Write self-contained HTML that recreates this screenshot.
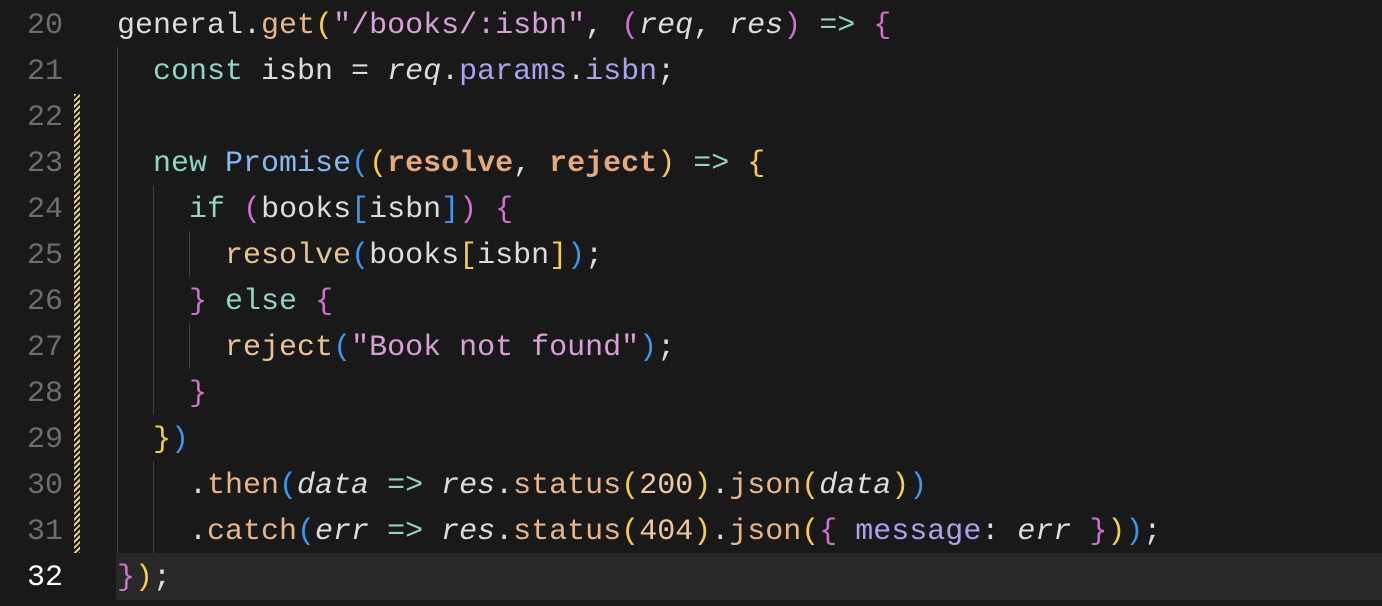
<!DOCTYPE html>
<html><head><style>
html,body{margin:0;padding:0;background:#191919;width:1382px;height:606px;overflow:hidden}
.ed{position:relative;width:1382px;height:606px;font-family:"Liberation Mono",monospace;font-size:30px}
.ln{position:absolute;left:0;width:63px;text-align:right;color:#6e6e6e;height:46px;line-height:50px}
.cl{position:absolute;left:117px;white-space:pre;height:46px;line-height:50px;color:#dcdcdc}
.hl{position:absolute;left:116px;right:0;top:553px;height:47px;background:#282828}
.g{position:absolute;width:1px;background:#404040}
.bar{position:absolute;left:74px;top:94px;width:6px;height:459px;background:repeating-linear-gradient(135deg,#e8cf86 0 2px,#191919 2px 4px)}
.k{color:#8fd4c5}.m{color:#e8b48a}.s{color:#d8a0d8}.y{color:#f5cf45}.p{color:#d26fd2}.b{color:#3d96ef}
.c{color:#84b9f5}.a{color:#e5a879;font-weight:bold}.i{font-style:italic}.v{color:#a9a2ef}.n{color:#f0c8a0}.f{color:#e8c590}
</style></head><body><div class="ed">
<div class="hl"></div>
<div class="bar"></div>
<div class="g" style="left:117px;top:47px;height:506px"></div>
<div class="g" style="left:153px;top:185px;height:230px"></div>
<div class="g" style="left:153px;top:461px;height:92px"></div>
<div class="g" style="left:189px;top:231px;height:46px"></div>
<div class="g" style="left:189px;top:323px;height:46px"></div>

<div class="ln" style="top:1px">20</div>
<div class="ln" style="top:47px">21</div>
<div class="ln" style="top:93px">22</div>
<div class="ln" style="top:139px">23</div>
<div class="ln" style="top:185px">24</div>
<div class="ln" style="top:231px">25</div>
<div class="ln" style="top:277px">26</div>
<div class="ln" style="top:323px">27</div>
<div class="ln" style="top:369px">28</div>
<div class="ln" style="top:415px">29</div>
<div class="ln" style="top:461px">30</div>
<div class="ln" style="top:507px">31</div>
<div class="ln" style="top:553px;color:#fff">32</div>

<div class="cl" style="top:1px">general.<span class="m">get</span><span class="y">(</span><span class="s">"/books/:isbn"</span>, <span class="p">(</span><span class="i">req</span>, <span class="i">res</span><span class="p">)</span> <span class="k">=&gt;</span> <span class="p">{</span></div>
<div class="cl" style="top:47px">  <span class="k">const</span> isbn = <span class="i">req</span>.<span class="v">params</span>.<span class="v">isbn</span>;</div>
<div class="cl" style="top:139px">  <span class="k">new</span> <span class="c">Promise</span><span class="b">(</span><span class="y">(</span><span class="a">resolve</span>, <span class="a">reject</span><span class="y">)</span> <span class="k">=&gt;</span> <span class="y">{</span></div>
<div class="cl" style="top:185px">    <span class="k">if</span> <span class="p">(</span>books<span class="b">[</span>isbn<span class="b">]</span><span class="p">)</span> <span class="p">{</span></div>
<div class="cl" style="top:231px">      <span class="f">resolve</span><span class="b">(</span>books<span class="y">[</span>isbn<span class="y">]</span><span class="b">)</span>;</div>
<div class="cl" style="top:277px">    <span class="p">}</span> <span class="k">else</span> <span class="p">{</span></div>
<div class="cl" style="top:323px">      <span class="f">reject</span><span class="b">(</span><span class="s">"Book not found"</span><span class="b">)</span>;</div>
<div class="cl" style="top:369px">    <span class="p">}</span></div>
<div class="cl" style="top:415px">  <span class="y">}</span><span class="b">)</span></div>
<div class="cl" style="top:461px">    .<span class="m">then</span><span class="b">(</span><span class="i">data</span> <span class="k">=&gt;</span> <span class="i">res</span>.<span class="m">status</span><span class="y">(</span><span class="n">200</span><span class="y">)</span>.<span class="m">json</span><span class="y">(</span><span class="i">data</span><span class="y">)</span><span class="b">)</span></div>
<div class="cl" style="top:507px">    .<span class="m">catch</span><span class="b">(</span><span class="i">err</span> <span class="k">=&gt;</span> <span class="i">res</span>.<span class="m">status</span><span class="y">(</span><span class="n">404</span><span class="y">)</span>.<span class="m">json</span><span class="y">(</span><span class="p">{</span> <span class="v">message</span>: <span class="i">err</span> <span class="p">}</span><span class="y">)</span><span class="b">)</span>;</div>
<div class="cl" style="top:553px"><span class="p">}</span><span class="y">)</span>;</div>
</div></body></html>
